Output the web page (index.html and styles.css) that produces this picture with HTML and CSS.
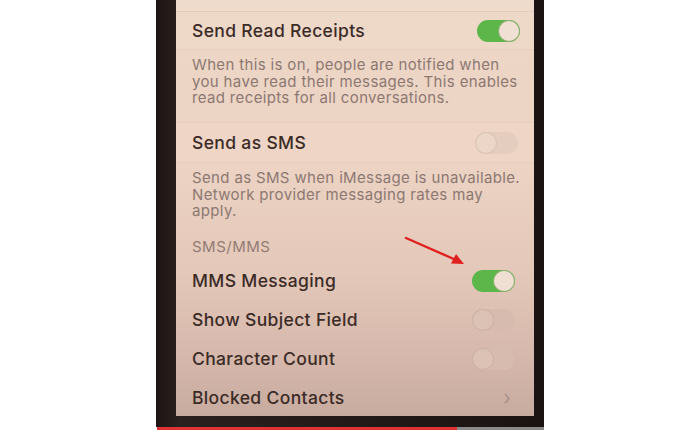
FILE: index.html
```html
<!DOCTYPE html>
<html>
<head>
<meta charset="utf-8">
<link rel="stylesheet" href="styles.css">
</head>
<body>
<div class="stage">
  <div class="phone">
    <div class="screen">
      <div class="band"></div>
      <div class="row first">
        <span class="label">Send Read Receipts</span>
        <span class="toggle on"></span>
      </div>
      <div class="desc d1">When this is on, people are notified when you have read their messages. This enables read receipts for all conversations.</div>
      <div class="row second">
        <span class="label">Send as SMS</span>
        <span class="toggle"></span>
      </div>
      <div class="desc d2">Send as SMS when iMessage is unavailable. Network provider messaging rates may apply.</div>
      <div class="header">SMS/MMS</div>
      <div class="row r3">
        <span class="label">MMS Messaging</span>
        <span class="toggle on"></span>
      </div>
      <div class="row r4">
        <span class="label">Show Subject Field</span>
        <span class="toggle"></span>
      </div>
      <div class="row r5">
        <span class="label">Character Count</span>
        <span class="toggle"></span>
      </div>
      <div class="row r6">
        <span class="label">Blocked Contacts</span>
        <span class="chev">&#x203A;</span>
      </div>
      <svg class="arrow" width="70" height="40" viewBox="0 0 70 40">
        <line x1="2" y1="2" x2="52" y2="24" stroke="#e0201f" stroke-width="2.4" stroke-linecap="round"/>
        <polygon points="60,28 47,27.5 52,18" fill="#e0201f"/>
      </svg>
    </div>
  </div>
  <div class="progress"><div class="played"></div></div>
</div>
</body>
</html>
```

FILE: styles.css
```css
html, body {
  margin: 0;
  padding: 0;
  background: #ffffff;
}
body {
  width: 700px;
  height: 430px;
  overflow: hidden;
  font-family: "Inter", "Liberation Sans", sans-serif;
}
.stage {
  padding-left: 156px;
  width: 388px;
}
.phone {
  height: 427px;
  background: linear-gradient(90deg, #1d1514 0%, #2a201e 6%, #1a1312 100%);
  padding: 0 10px 0 20px;
  box-sizing: border-box;
}
.screen {
  position: relative;
  height: 416px;
  background: linear-gradient(180deg, #eed7c7 0%, #ecd3c3 40%, #e4c8b9 65%, #d6b9ac 85%, #c8ab9f 100%);
  overflow: hidden;
}
.band {
  height: 12px;
  background: #efdbcc;
  border-bottom: 1px solid #e4cbbb;
  box-sizing: border-box;
}
.row {
  display: flex;
  align-items: center;
  justify-content: space-between;
  padding: 0 14px 0 16px;
  box-sizing: border-box;
}
.label {
  font-size: 17.5px;
  font-weight: 500;
  color: #3b2b27;
  letter-spacing: 0.35px;
}
.row.first {
  height: 38px;
  background: #eed8c8;
  border-bottom: 1px solid #e6cdbd;
}
.row.second {
  height: 41px;
  background: #eed5c5;
  border-top: 1px solid #e6cdbd;
  border-bottom: 1px solid #e6cdbd;
  padding-right: 16px;
}
.desc {
  padding: 7px 12px 0 16px;
  font-size: 15px;
  line-height: 16.5px;
  letter-spacing: 0.35px;
  color: #8c7872;
  box-sizing: border-box;
}
.d1 { height: 72px; }
.d2 { height: 67px; }
.header {
  height: 31px;
  padding: 7px 16px 0 16px;
  box-sizing: border-box;
  font-size: 15px;
  letter-spacing: 0.5px;
  color: #927c74;
}
.r3, .r4, .r5, .r6 {
  height: 39px;
  padding-right: 19px;
}
.toggle {
  display: block;
  width: 43px;
  height: 22px;
  border-radius: 11px;
  background: #e4ccbe;
  position: relative;
  box-sizing: border-box;
}
.toggle::after {
  content: "";
  position: absolute;
  left: 1px;
  top: 1px;
  width: 20px;
  height: 20px;
  border-radius: 50%;
  background: #ecd6c7;
  box-shadow: 0 0 0 1px #dcc3b5;
}
.toggle.on {
  background: #5db64a;
}
.toggle.on::after {
  left: auto;
  right: 1px;
  background: #f0e0d4;
  box-shadow: 0 0 0 1px #8fb274;
}
.r4 .toggle, .r5 .toggle { background: #d6bbae; }
.r4 .toggle::after, .r5 .toggle::after { background: #dcc2b5; box-shadow: 0 0 0 1px #ceb2a5; }
.chev {
  font-size: 20px;
  line-height: 20px;
  color: #a8928a;
  margin-right: 4px;
}
.arrow {
  position: absolute;
  left: 228px;
  top: 236px;
}
.progress {
  height: 3px;
  margin-left: 1px;
  background: #8a8a8a;
}
.played {
  width: 300px;
  height: 3px;
  background: #e03232;
}
```
